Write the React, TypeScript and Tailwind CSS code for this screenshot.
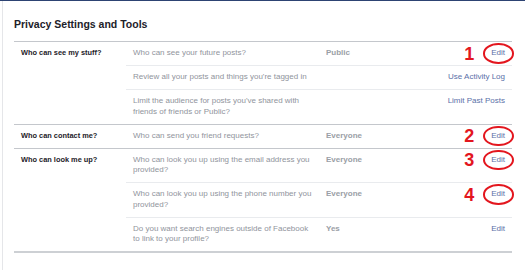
import type { ReactNode } from 'react'

interface SubRow {
  text: ReactNode
  value?: string
  link: string
  mark?: number
}

interface Section {
  label: string
  rows: SubRow[]
}

const SECTIONS: Section[] = [
  {
    label: 'Who can see my stuff?',
    rows: [
      { text: 'Who can see your future posts?', value: 'Public', link: 'Edit', mark: 1 },
      { text: "Review all your posts and things you're tagged in", link: 'Use Activity Log' },
      {
        text: "Limit the audience for posts you've shared with friends of friends or Public?",
        link: 'Limit Past Posts',
      },
    ],
  },
  {
    label: 'Who can contact me?',
    rows: [{ text: 'Who can send you friend requests?', value: 'Everyone', link: 'Edit', mark: 2 }],
  },
  {
    label: 'Who can look me up?',
    rows: [
      {
        text: 'Who can look you up using the email address you provided?',
        value: 'Everyone',
        link: 'Edit',
        mark: 3,
      },
      {
        text: 'Who can look you up using the phone number you provided?',
        value: 'Everyone',
        link: 'Edit',
        mark: 4,
      },
      {
        text: 'Do you want search engines outside of Facebook to link to your profile?',
        value: 'Yes',
        link: 'Edit',
      },
    ],
  },
]

function LinkCell({ link, mark }: { link: string; mark?: number }) {
  return (
    <span className="relative ml-auto whitespace-nowrap text-[#5a70a8]">
      {link}
      {mark !== undefined && (
        <>
          {/* annotation: red ring round the link */}
          <span className="pointer-events-none absolute -left-[8px] -right-[9px] -top-[5px] -bottom-[5px] rounded-[50%] border-2 border-[#e3161e]" />
          <span className="pointer-events-none absolute right-[calc(100%+17px)] top-1/2 -translate-y-1/2 text-[18px] font-bold leading-none text-[#e3161e]">
            {mark}
          </span>
        </>
      )}
    </span>
  )
}

export default function App() {
  return (
    <div className="h-[270px] w-[525px] overflow-hidden border-t border-[#2d4373] bg-white font-['Liberation_Sans',Arial,sans-serif]">
      <div className="ml-[2px] h-full border-l border-[#e5e6e9] pl-[11px] pr-[13px]">
        <h1 className="h-[40px] pt-[17px] text-[10.5px] font-bold leading-[12px] text-[#1d2129]">
          Privacy Settings and Tools
        </h1>

        <div className="border-b-2 border-[#cdd0d4]">
          {SECTIONS.map((section) => (
            <div key={section.label} className="flex border-t border-[#c4c7cc]">
              <div className="w-[112px] shrink-0 py-[6.25px] pl-[7px] text-[7.4px] font-bold leading-[10.5px] text-[#1d2129]">
                {section.label}
              </div>
              <div className="flex-1">
                {section.rows.map((row, i) => (
                  <div
                    key={i}
                    className={`flex items-start py-[6.25px] pl-[7px] pr-[7px] text-[8px] leading-[10.5px] ${
                      i > 0 ? 'border-t border-[#e9ebee]' : ''
                    }`}
                  >
                    <span className="w-[180px] shrink-0 text-[#90949c]">{row.text}</span>
                    <span className="ml-[13px] font-bold text-[#9a9ea6]">{row.value}</span>
                    <LinkCell link={row.link} mark={row.mark} />
                  </div>
                ))}
              </div>
            </div>
          ))}
        </div>
      </div>
    </div>
  )
}
